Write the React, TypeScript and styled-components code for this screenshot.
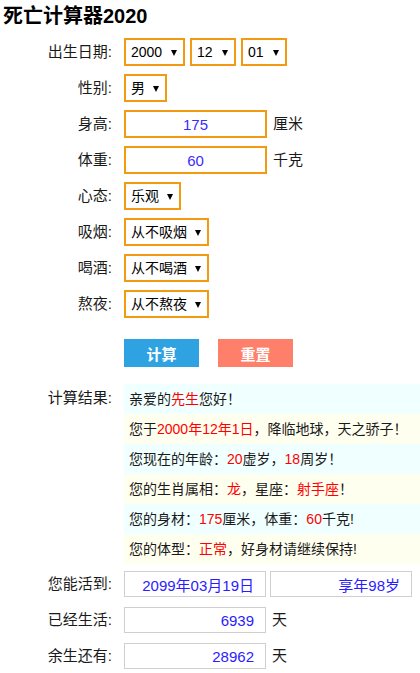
import React from "react";
import styled, { createGlobalStyle } from "styled-components";

const Global = createGlobalStyle`
  html, body { margin: 0; padding: 0; background: #fff; }
  body {
    font-family: "Liberation Sans", "Noto Sans CJK SC", sans-serif;
    color: #222;
    width: 420px;
    overflow: hidden;
  }
`;

const Page = styled.div`
  width: 420px;
  padding: 0 0 8px 0;
  box-sizing: border-box;
`;

const Title = styled.h1`
  margin: 0 0 8px 0;
  padding: 3px 3px 0 3px;
  font-size: 20px;
  line-height: 27px;
  font-weight: bold;
  color: #000;
`;

const Form = styled.div`
  display: flex;
  flex-direction: column;
  gap: 8px;
`;

const Row = styled.div`
  display: flex;
  align-items: center;
  min-height: 28px;
`;

const Label = styled.div`
  width: 112px;
  margin-right: 12px;
  text-align: right;
  font-size: 15px;
  line-height: 20px;
  color: #1a1a1a;
  flex: none;
`;

const TopLabel = styled(Label)`
  align-self: flex-start;
  margin-top: 4px;
`;

const Controls = styled.div`
  display: flex;
  align-items: center;
  gap: 5px;
`;

const SelectWrap = styled.span<{ $w: number }>`
  position: relative;
  display: inline-block;
  width: ${(p) => p.$w}px;
  height: 28px;
  &::after {
    content: "";
    position: absolute;
    right: 8px;
    top: 12px;
    border-left: 3px solid transparent;
    border-right: 3px solid transparent;
    border-top: 6px solid #000;
    pointer-events: none;
  }
`;

const Select = styled.select`
  appearance: none;
  -webkit-appearance: none;
  width: 100%;
  height: 28px;
  box-sizing: border-box;
  border: 2px solid #f39a12;
  border-radius: 0;
  background: #fff;
  padding: 0 16px 0 5px;
  font-family: "Liberation Sans", "Noto Sans CJK SC", sans-serif;
  font-size: 14px;
  color: #000;
  outline: none;
`;

const TextInput = styled.input`
  width: 143px;
  height: 28px;
  box-sizing: border-box;
  border: 2px solid #f39a12;
  border-radius: 0;
  text-align: center;
  font-family: "Liberation Sans", "Noto Sans CJK SC", sans-serif;
  font-size: 15px;
  color: #3a2cff;
  outline: none;
  padding: 0;
`;

const Unit = styled.span`
  font-size: 15px;
  line-height: 20px;
  margin-left: 6px;
  color: #1a1a1a;
`;

const Buttons = styled.div`
  display: flex;
  gap: 19px;
  margin-left: 124px;
  margin-top: 21px;
`;

const Button = styled.button<{ $bg: string }>`
  width: 75px;
  height: 28px;
  border: none;
  border-radius: 0;
  background: ${(p) => p.$bg};
  color: #fff;
  font-family: "Liberation Sans", "Noto Sans CJK SC", sans-serif;
  font-size: 15px;
  font-weight: bold;
  padding: 0;
  cursor: pointer;
`;

const ResultSection = styled.div`
  display: flex;
  margin-top: 17px;
`;

const ResultBox = styled.div`
  flex: 1;
  display: flex;
  flex-direction: column;
`;

const ResultLine = styled.div<{ $alt: boolean }>`
  height: 30px;
  line-height: 30px;
  padding-left: 5px;
  font-size: 14px;
  color: #1a1a1a;
  background: ${(p) => (p.$alt ? "#fffff0" : "#f0ffff")};
  white-space: nowrap;
`;

const Red = styled.span`
  color: #ff0000;
`;

const OutRows = styled.div`
  display: flex;
  flex-direction: column;
  margin-top: 7px;
  gap: 10px;
`;

const OutRow = styled.div`
  display: flex;
  align-items: center;
  height: 26px;
`;

const OutInput = styled.input`
  width: 142px;
  height: 26px;
  box-sizing: border-box;
  border: 1px solid #cfcfcf;
  border-radius: 0;
  text-align: right;
  padding: 0 11px 0 0;
  font-family: "Liberation Sans", "Noto Sans CJK SC", sans-serif;
  font-size: 15px;
  color: #2a1cff;
  outline: none;
  background: #fff;
`;

const Pair = styled.div`
  display: flex;
  gap: 4px;
`;

const years = Array.from({ length: 101 }, (_, i) => String(1950 + i));
const months = Array.from({ length: 12 }, (_, i) => String(i + 1).padStart(2, "0"));
const days = Array.from({ length: 31 }, (_, i) => String(i + 1).padStart(2, "0"));

function Sel({ w, value, options }: { w: number; value: string; options: string[] }) {
  return (
    <SelectWrap $w={w}>
      <Select defaultValue={value}>
        {options.map((o) => (
          <option key={o} value={o}>
            {o}
          </option>
        ))}
      </Select>
    </SelectWrap>
  );
}

export default function App() {
  return (
    <Page>
      <Global />
      <Title>死亡计算器2020</Title>
      <Form>
        <Row>
          <Label>出生日期:</Label>
          <Controls>
            <Sel w={61} value="2000" options={years} />
            <Sel w={46} value="12" options={months} />
            <Sel w={46} value="01" options={days} />
          </Controls>
        </Row>
        <Row>
          <Label>性别:</Label>
          <Sel w={43} value="男" options={["男", "女"]} />
        </Row>
        <Row>
          <Label>身高:</Label>
          <TextInput defaultValue="175" />
          <Unit>厘米</Unit>
        </Row>
        <Row>
          <Label>体重:</Label>
          <TextInput defaultValue="60" />
          <Unit>千克</Unit>
        </Row>
        <Row>
          <Label>心态:</Label>
          <Sel w={57} value="乐观" options={["乐观", "一般", "悲观"]} />
        </Row>
        <Row>
          <Label>吸烟:</Label>
          <Sel w={85} value="从不吸烟" options={["从不吸烟", "偶尔吸烟", "经常吸烟"]} />
        </Row>
        <Row>
          <Label>喝酒:</Label>
          <Sel w={85} value="从不喝酒" options={["从不喝酒", "偶尔喝酒", "经常喝酒"]} />
        </Row>
        <Row>
          <Label>熬夜:</Label>
          <Sel w={85} value="从不熬夜" options={["从不熬夜", "偶尔熬夜", "经常熬夜"]} />
        </Row>
      </Form>
      <Buttons>
        <Button $bg="#2fa3e1">计算</Button>
        <Button $bg="#ff806a">重置</Button>
      </Buttons>
      <ResultSection>
        <TopLabel>计算结果:</TopLabel>
        <ResultBox>
          <ResultLine $alt={false}>
            亲爱的<Red>先生</Red>您好！
          </ResultLine>
          <ResultLine $alt={true}>
            您于<Red>2000年12年1日</Red>，降临地球，天之骄子！
          </ResultLine>
          <ResultLine $alt={false}>
            您现在的年龄：<Red>20</Red>虚岁，<Red>18</Red>周岁！
          </ResultLine>
          <ResultLine $alt={true}>
            您的生肖属相：<Red>龙</Red>，星座：<Red>射手座</Red>！
          </ResultLine>
          <ResultLine $alt={false}>
            您的身材：<Red>175</Red>厘米，体重：<Red>60</Red>千克!
          </ResultLine>
          <ResultLine $alt={true}>
            您的体型：<Red>正常</Red>，好身材请继续保持!
          </ResultLine>
        </ResultBox>
      </ResultSection>
      <OutRows>
        <OutRow>
          <Label>您能活到:</Label>
          <Pair>
            <OutInput readOnly value="2099年03月19日" />
            <OutInput readOnly value="享年98岁" />
          </Pair>
        </OutRow>
        <OutRow>
          <Label>已经生活:</Label>
          <OutInput readOnly value="6939" />
          <Unit>天</Unit>
        </OutRow>
        <OutRow>
          <Label>余生还有:</Label>
          <OutInput readOnly value="28962" />
          <Unit>天</Unit>
        </OutRow>
      </OutRows>
    </Page>
  );
}
